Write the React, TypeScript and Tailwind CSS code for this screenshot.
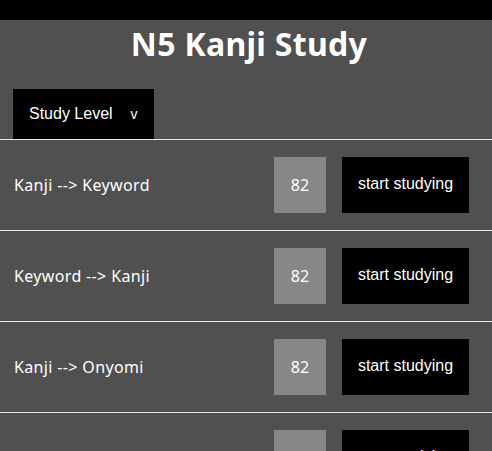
const modes = [
  { label: 'Kanji --> Keyword', count: 82 },
  { label: 'Keyword --> Kanji', count: 82 },
  { label: 'Kanji --> Onyomi', count: 82 },
  { label: 'Onyomi --> Kanji', count: 82 },
];

function ModeRow({ label, count }: { label: string; count: number }) {
  return (
    <div className="flex items-center border-t border-[#e6e6e6] h-[91px] pl-[14px] pr-[23px]">
      <span className="text-white text-[16px] tracking-[0.35px] font-['Noto_Sans',sans-serif]">{label}</span>
      <div className="ml-auto w-[52px] h-[56px] bg-[#878787] flex items-center justify-center text-white text-[16px] font-['Noto_Sans',sans-serif]">
        {count}
      </div>
      <button className="ml-4 w-[127px] h-[56px] bg-black text-white text-[16px] font-['Liberation_Sans',sans-serif] pb-[3px]">
        start studying
      </button>
    </div>
  );
}

export default function App() {
  return (
    <div className="min-h-screen bg-[#505050]">
      <div className="h-5 bg-black" />
      <h1 className="h-[69px] pt-[8px] pl-[6px] leading-none text-center text-white text-[32px] font-bold tracking-[0.3px] font-['Noto_Sans',sans-serif]">
        N5 Kanji Study
      </h1>
      {/* dropdown */}
      <div className="pl-[13px]">
        <button className="w-[141px] h-[50px] bg-black text-white flex items-center pl-4 text-[16px] font-['Liberation_Sans',sans-serif]">
          Study Level
          <span className="ml-[18px] text-[14px]">v</span>
        </button>
      </div>
      <div>
        {modes.map((m) => (
          <ModeRow key={m.label} label={m.label} count={m.count} />
        ))}
      </div>
    </div>
  );
}
